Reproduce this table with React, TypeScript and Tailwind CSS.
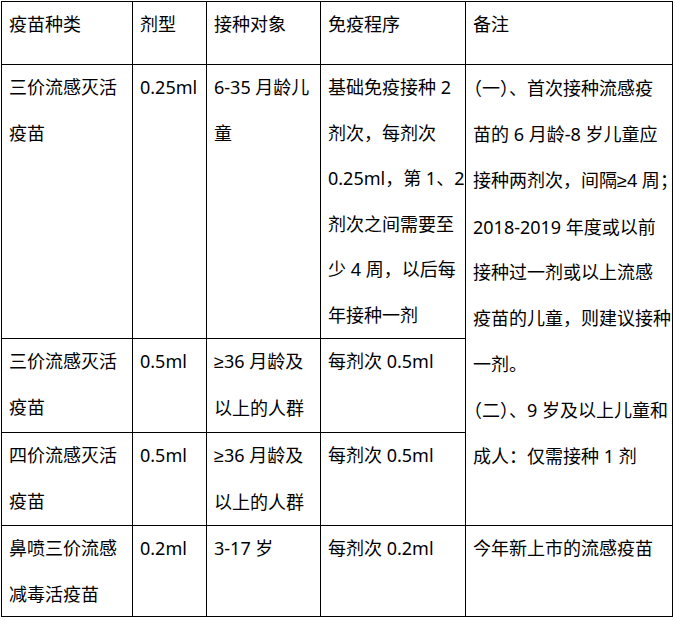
import React from 'react'

type Row = {
  name: string[]
  form: string
  target: string[]
  schedule: string[]
}

const rows: Row[] = [
  {
    name: ['三价流感灭活', '疫苗'],
    form: '0.25ml',
    target: ['6-35 月龄儿', '童'],
    schedule: ['基础免疫接种 2', '剂次，每剂次', '0.25ml，第 1、2', '剂次之间需要至', '少 4 周，以后每', '年接种一剂'],
  },
  {
    name: ['三价流感灭活', '疫苗'],
    form: '0.5ml',
    target: ['≥36 月龄及', '以上的人群'],
    schedule: ['每剂次 0.5ml'],
  },
  {
    name: ['四价流感灭活', '疫苗'],
    form: '0.5ml',
    target: ['≥36 月龄及', '以上的人群'],
    schedule: ['每剂次 0.5ml'],
  },
  {
    name: ['鼻喷三价流感', '减毒活疫苗'],
    form: '0.2ml',
    target: ['3-17 岁'],
    schedule: ['每剂次 0.2ml'],
  },
]

const remark = [
  '（一）、首次接种流感疫',
  '苗的 6 月龄-8 岁儿童应',
  '接种两剂次，间隔≥4 周；',
  '2018-2019 年度或以前',
  '接种过一剂或以上流感',
  '疫苗的儿童，则建议接种',
  '一剂。',
  '（二）、9 岁及以上儿童和',
  '成人：仅需接种 1 剂',
]

// ≥ in a latin face, some full-width punctuation at half width (closer to the original rendering)
function renderLine(text: string) {
  return text.split(/(≥|（|）|；)/).map((part, i) => {
    if (part === '≥') return <span key={i} className="font-['Liberation_Sans',sans-serif]">≥</span>
    if (part === '（' || part === '）' || part === '；')
      return <span key={i} className="font-['Noto_Sans_CJK_SC',sans-serif] [font-feature-settings:'halt']">{part}</span>
    return <React.Fragment key={i}>{part}</React.Fragment>
  })
}

function Cell({ lines, className = '' }: { lines: string[]; className?: string }) {
  return (
    <div className={`bg-white pl-[7px] whitespace-nowrap ${className}`}>
      {lines.map((l, i) => (
        <div key={i}>{renderLine(l)}</div>
      ))}
    </div>
  )
}

export default function App() {
  return (
    <div className="min-h-[620px] bg-white pt-px pl-px font-['Noto_Sans','Noto_Sans_CJK_SC',sans-serif] text-[18px] leading-[45.6px] text-black">
      <div className="grid w-fit grid-cols-[130px_73px_113px_144px_206px] grid-rows-[62px_273px_93px_92px_90px] gap-px bg-black p-px">
        {/* header */}
        <Cell lines={['疫苗种类']} />
        <Cell lines={['剂型']} />
        <Cell lines={['接种对象']} />
        <Cell lines={['免疫程序']} />
        <Cell lines={['备注']} />

        {rows.map((r, i) => (
          <React.Fragment key={i}>
            <Cell lines={r.name} />
            <Cell lines={[r.form]} />
            <Cell lines={r.target} />
            <Cell lines={r.schedule} />
            {i === 0 && <Cell lines={remark} className="row-span-3" />}
            {i === 3 && <Cell lines={['今年新上市的流感疫苗']} />}
          </React.Fragment>
        ))}
      </div>
    </div>
  )
}
